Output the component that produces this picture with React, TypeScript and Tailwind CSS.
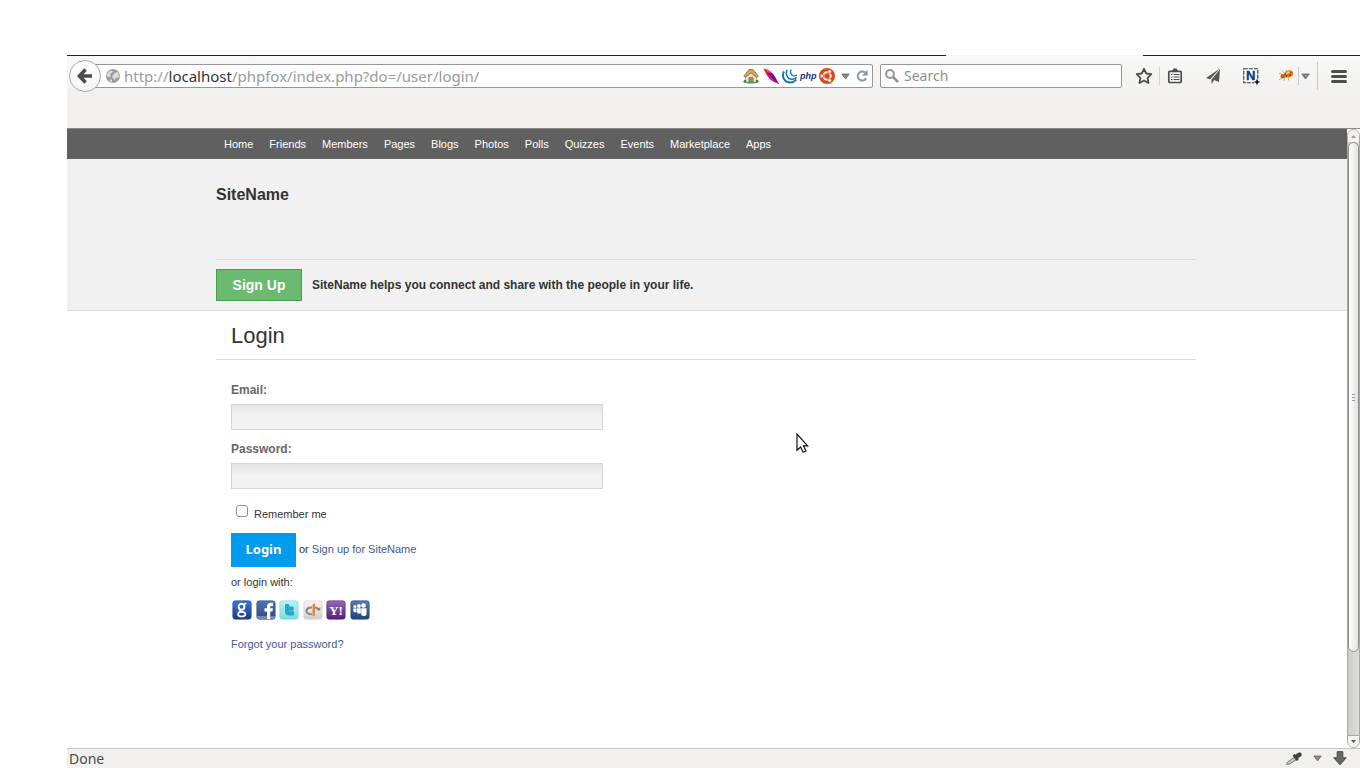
import React, { useState } from "react";

const navItems = ["Home", "Friends", "Members", "Pages", "Blogs", "Photos", "Polls", "Quizzes", "Events", "Marketplace", "Apps"];

function Caret({ className = "" }: { className?: string }) {
  return (
    <svg className={className} width="9" height="7" viewBox="0 0 9 7" aria-hidden="true">
      <path d="M.8 1h7.4L4.500 6z" fill="#8b8b89" stroke="#666" strokeWidth=".8" />
    </svg>
  );
}

function BackIcon() {
  return (
    <svg width="16" height="16" viewBox="0 0 16 16" aria-hidden="true">
      <path d="M8.500 1.500 2.500 8l6 6.500M3 8h12" fill="none" stroke="#4b4b4b" strokeWidth="3.600" />
    </svg>
  );
}

function GlobeIcon() {
  return (
    <svg width="14" height="14" viewBox="0 0 14 14" aria-hidden="true">
      <circle cx="7" cy="7" r="7" fill="#9b9b9b" />
      <path d="M1 5 4 1.500l3 .5-1 2-2 1 1 2-2 1.500L1 7zM8 5l2-2 2 .5L13.500 7 12 9l-2-.5L9 11 7 9.500 6 7zM4 10l2 1v2l-2-.6z" fill="#dcdcdc" />
    </svg>
  );
}

function HouseIcon() {
  return (
    <svg width="16" height="16" viewBox="0 0 16 16" aria-hidden="true">
      <ellipse cx="8" cy="13.800" rx="7.800" ry="1.800" fill="#4f9a4a" />
      <path d="M2.500 7.500 8 3l5.500 4.500v6.500h-11z" fill="#eee0c4" stroke="#b59a72" strokeWidth=".6" />
      <path d="M.8 8.300 6 1.500h4l5.300 6.800-1.600 1L8 4.800 2.400 9.300z" fill="#d9a45e" stroke="#8f6128" strokeWidth=".8" />
      <path d="M6 14V9.500h4V14z" fill="#8d8d90" stroke="#66666a" strokeWidth=".6" />
      <circle cx="2" cy="13" r="1.300" fill="#3f8b3c" />
      <circle cx="14" cy="13" r="1.300" fill="#3f8b3c" />
    </svg>
  );
}

function FeatherIcon() {
  return (
    <svg width="17" height="17" viewBox="0 0 17 17" aria-hidden="true">
      <path d="M.5.5C4 .8 7 2.500 9.500 5.500c3 3.500 4 6 5 8.500l1.500 2-3-1.200C8 13.500 3.500 8 .5.500z" fill="#c5128e" />
      <path d="M.5.500C3 .8 5.500 2 7 4L3.500 5.200C2.200 3.600 1.200 2 .5.500z" fill="#f0642c" />
      <path d="M9.500 5.500c3 3.500 4 6 5 8.500l-3-3L7 6z" fill="#5b1a87" />
      <path d="m2 2 14.300 14" stroke="#2a1555" strokeWidth=".7" />
    </svg>
  );
}

function JqueryIcon() {
  return (
    <svg width="16" height="16" viewBox="0 0 16 16" fill="none" stroke="#1a70b5" aria-hidden="true">
      <path d="M2 3.500C-.5 8 2 14 7.500 14.500c2.500.2 5-.8 6.800-2.800" strokeWidth="1.900" />
      <path d="M5 1.800C3.200 6 5 10.500 9 11.200c2.300.3 4.300-.4 5.700-1.800" strokeWidth="1.500" />
      <path d="M9 1.500c-1.200 3 .2 6 2.800 6.400 1.300.2 2.400-.2 3.200-.9" strokeWidth="1.300" />
    </svg>
  );
}

function PhpIcon() {
  return (
    <svg width="17" height="12" viewBox="0 0 17 12" aria-hidden="true">
      <text x="0" y="9" fontFamily="Liberation Sans, sans-serif" fontSize="9" fontWeight="bold" fontStyle="italic" fill="#27337f">php</text>
    </svg>
  );
}

function UbuntuIcon() {
  return (
    <svg width="16" height="16" viewBox="0 0 16 16" aria-hidden="true">
      <circle cx="8" cy="8" r="8" fill="#dd4814" />
      <circle cx="8" cy="8" r="3.700" fill="none" stroke="#fff" strokeWidth="1.900" />
      <g fill="#fff" stroke="#dd4814" strokeWidth=".8">
        <circle cx="2.900" cy="8" r="1.900" />
        <circle cx="10.600" cy="3.600" r="1.900" />
        <circle cx="10.600" cy="12.400" r="1.900" />
      </g>
    </svg>
  );
}

function ReloadIcon() {
  return (
    <svg width="12" height="12" viewBox="0 0 12 12" aria-hidden="true">
      <path d="M10.200 8.200A4.500 4.500 0 1 1 9 2.500" fill="none" stroke="#8795a1" strokeWidth="2" />
      <path d="M11.600 0v5.600H6z" fill="#8795a1" />
    </svg>
  );
}

function SearchIcon() {
  return (
    <svg width="14" height="14" viewBox="0 0 14 14" fill="none" stroke="#949494" aria-hidden="true">
      <circle cx="5" cy="5" r="3.900" strokeWidth="2" />
      <path d="m8 8 5 5" strokeWidth="2.600" />
    </svg>
  );
}

function StarIcon() {
  return (
    <svg width="18" height="18" viewBox="0 0 18 18" aria-hidden="true">
      <path d="m9 1.800 2.200 4.700 5.100.7-3.700 3.600.9 5.200L9 13.500 4.500 16l.9-5.200-3.700-3.600 5.100-.7z" fill="none" stroke="#4d4d4d" strokeWidth="1.800" strokeLinejoin="round" />
    </svg>
  );
}

function ClipboardIcon() {
  return (
    <svg width="16" height="16" viewBox="0 0 16 16" aria-hidden="true">
      <path d="M5 3 6.500.5h3L11 3z" fill="#4d4d4d" />
      <rect x="1.800" y="3.300" width="12.400" height="11.200" rx="1" fill="#f6f6f6" stroke="#4d4d4d" strokeWidth="1.700" />
      <path d="M4 6.500h1.500M6.500 6.500H12.500M4 9h1.500M6.500 9H12.500M4 11.500h1.500M6.500 11.500H12.500" stroke="#4d4d4d" strokeWidth="1.100" />
    </svg>
  );
}

function PlaneIcon() {
  return (
    <svg width="16" height="16" viewBox="0 0 16 16" aria-hidden="true">
      <path d="M15 .5 1 10l4 1.200zM14.500 2 6.500 11.500V16l2.200-3.200zM15 .500 9.200 12l4.800 2z" fill="#555" />
    </svg>
  );
}

function SelectionIcon() {
  return (
    <svg width="17" height="17" viewBox="0 0 17 17" aria-hidden="true">
      <rect x=".8" y=".8" width="14" height="14" fill="#fff" stroke="#333" strokeWidth="1.100" strokeDasharray="4 1" />
      <text x="3" y="12" fontFamily="Liberation Sans, sans-serif" fontSize="13" fontWeight="bold" fill="#0b3b94" stroke="#0b3b94" strokeWidth=".4">N</text>
      <path d="M14 11v6M11 14h6" stroke="#fff" strokeWidth="3" />
      <path d="M14 11.500v5M11.500 14h5" stroke="#111" strokeWidth="1.600" />
    </svg>
  );
}

function BugIcon() {
  return (
    <svg width="16" height="16" viewBox="0 0 16 16" aria-hidden="true">
      <path d="M4 6.500 1 5M4.500 9.500 1 12M7 10l-1.500 3M10 10l1 2.500M6 5 4 2.500M9 4.500 8 2M13 7l2 1" stroke="#a59b85" strokeWidth=".8" fill="none" />
      <ellipse cx="10.500" cy="6" rx="4.800" ry="3.600" transform="rotate(-24 10.500 6)" fill="#e87812" />
      <circle cx="4.800" cy="8.300" r="2.300" fill="#c75c10" />
      <ellipse cx="10" cy="4.700" rx="2.600" ry="1.100" transform="rotate(-22 10 4.700)" fill="#ffc94e" />
      <path d="m8 8.300 1-1M11 7.500l1.500-1M12.500 4l.8.400M7 5.500l.5 1" stroke="#411b03" strokeWidth="1.200" />
    </svg>
  );
}

function DropperIcon() {
  return (
    <svg width="18" height="14" viewBox="0 0 18 14" aria-hidden="true">
      <path d="m1.500 12.500 1-2.500 6.500-4.500 2 2.500-6.500 4z" fill="#c9c9c6" stroke="#777" strokeWidth="1" />
      <path d="m7.500 3.500 2-1.500 1.200.8C12 .8 14-.2 15.800.8c1.700 1.200.9 3.600-1.300 4.500l-1 .5v2.200l-1.900.9z" fill="#414141" />
    </svg>
  );
}

function DownloadIcon() {
  return (
    <svg width="14" height="15" viewBox="0 0 14 15" aria-hidden="true">
      <path d="M4.200.7h5.600v6.100h3.400L7 13.800.8 6.800h3.400z" fill="#666" stroke="#444" strokeWidth="1" strokeLinejoin="round" />
    </svg>
  );
}

type Social = { name: string; top: string; bottom: string; glyph: React.ReactNode };

const socials: Social[] = [
  {
    name: "Google", top: "#3974e8", bottom: "#1e3c82",
    glyph: (
      <g fill="none" stroke="#fff">
        <ellipse cx="9.500" cy="6.800" rx="2.900" ry="3" strokeWidth="1.900" />
        <ellipse cx="9.700" cy="14.200" rx="3.600" ry="2.300" strokeWidth="1.700" />
        <path d="M11.500 4.200 14.500 3.500M8.800 9.800c-1.600 1.100-.5 1.700 1.500 2.200" strokeWidth="1.500" />
      </g>
    ),
  },
  {
    name: "Facebook", top: "#5275b4", bottom: "#2c4983",
    glyph: <><path d="M1 16h18v3H1z" fill="#6d88ba" /><path d="M11 19v-7.500H8.500V8.300H11V6.500c0-2.500 1.500-3.700 4-3.700h2V6h-1.500c-1 0-1.300.3-1.300 1.200v1.100h2.700l-.5 3.200h-2.200V19z" fill="#fff" /></>,
  },
  {
    name: "Twitter", top: "#b8f2f5", bottom: "#7fd9e2",
    glyph: <path d="M6.500 4.500v7.300c0 2.300 1.300 3.200 3.700 3.200h4.300v-3.200h-3.800c-.8 0-1-.3-1-1v-.6h4.500V7H9.700V4.500z" fill="#27a5c9" stroke="#27a5c9" strokeWidth="1" strokeLinejoin="round" />,
  },
  {
    name: "OpenID", top: "#f6f6f6", bottom: "#cfcfcf",
    glyph: <><path d="M9 7.500c-3.300 0-5.500 1.300-5.500 3.500 0 1.900 2 3.200 5.500 3.400M12 7.600c2 .2 3 .6 4 1.500" fill="none" stroke="#858585" strokeWidth="1.900" /><path d="m17.500 7.200-.5 3.500-4-1z" fill="#858585" /><path d="M9.500 4.500 12 3.200v12l-2.500 1.300z" fill="#ef8518" /></>,
  },
  {
    name: "Yahoo", top: "#9568b5", bottom: "#562078",
    glyph: <text x="10" y="15" textAnchor="middle" fontFamily="Liberation Serif, serif" fontSize="13" fontWeight="bold" fill="#fff">Y!</text>,
  },
  {
    name: "MySpace", top: "#5879b7", bottom: "#244179",
    glyph: <g fill="#fff"><circle cx="13.500" cy="5.500" r="2.300" /><circle cx="8.900" cy="6" r="1.900" /><circle cx="4.900" cy="6.500" r="1.600" /><path d="M3.300 8.500h3.100v3.700H5c-1.100 0-1.700-.6-1.700-1.500zM6.900 8.300h3.900v5.200H9c-1.300 0-2.100-.7-2.100-1.800zM11.200 8.200h5.300v5.500c0 1.500-.8 2.300-2.300 2.300h-.7c-1.500 0-2.300-.7-2.300-2z" /></g>,
  },
];

function SocialIcon({ item }: { item: Social }) {
  const id = `fill-${item.name}`;
  return (
    <svg width="20" height="20" viewBox="0 0 20 20" aria-hidden="true">
      <defs>
        <linearGradient id={id} x1="0" y1="0" x2="0" y2="1">
          <stop offset="0" stopColor={item.top} />
          <stop offset="1" stopColor={item.bottom} />
        </linearGradient>
      </defs>
      <rect x=".8" y=".8" width="18.400" height="18.400" rx="2.500" fill={`url(#${id})`} stroke={item.bottom} strokeOpacity=".6" />
      {item.glyph}
    </svg>
  );
}

function BrowserBar() {
  return (
    <header className="h-[73px] border-b border-[#8e8c89] bg-linear-to-b from-[#f8f8f7] to-[#f1f0ee] to-60% font-['Noto_Sans',sans-serif] text-[#4c4c4c]">
      <div className="flex h-10 items-center pr-[13px]">
        <button aria-label="Back" className="z-10 ml-0.5 flex size-8 shrink-0 items-center justify-center rounded-full border border-[#a4adb8] bg-linear-to-b from-white to-[#f4f4f3]">
          <BackIcon />
        </button>
        <div className="-ml-2 flex h-6 min-w-0 flex-1 items-center rounded-r-xs border border-[#979797] bg-white pr-1 pl-3">
          <GlobeIcon />
          <div className="ml-1 min-w-0 flex-1 overflow-hidden text-[15px] leading-5 whitespace-nowrap text-[#9b9b9b]">
            http://<span className="text-[#333]">localhost</span>/phpfox/index.php?do=/user/login/
          </div>
          <div className="flex items-center gap-0.5">
            <button aria-label="Home page" className="mr-0.5"><HouseIcon /></button>
            <button aria-label="Apache"><FeatherIcon /></button>
            <button aria-label="jQuery"><JqueryIcon /></button>
            <button aria-label="PHP manual"><PhpIcon /></button>
            <button aria-label="Ubuntu"><UbuntuIcon /></button>
          </div>
          <button aria-label="Show history" className="ml-1.5"><Caret /></button>
          <button aria-label="Reload" className="ml-1.5"><ReloadIcon /></button>
        </div>
        <label className="ml-[7px] flex h-6 w-[242px] shrink-0 items-center gap-[5px] rounded-xs border border-[#979797] bg-white pl-1">
          <SearchIcon />
          <input aria-label="Search" placeholder="Search" className="min-w-0 flex-1 text-sm leading-5 outline-none placeholder:text-[#8f8f8f]" />
        </label>
        <div className="ml-3 flex shrink-0 items-center">
          <button aria-label="Bookmark this page" className="mr-1.5 ml-px"><StarIcon /></button>
          <span className="h-[18px] w-px bg-[#cfd3d8]" />
          <button aria-label="Bookmarks" className="ml-[7px]"><ClipboardIcon /></button>
          <button aria-label="Send" className="ml-[22px]"><PlaneIcon /></button>
          <button aria-label="Capture selection" className="ml-[22px]"><SelectionIcon /></button>
          <button aria-label="Firebug" className="ml-[18px]"><BugIcon /></button>
          <span className="ml-1 h-[18px] w-px bg-[#c3cad3]" />
          <button aria-label="Firebug options" className="ml-0.5"><Caret /></button>
          <span className="ml-[7px] h-7 w-px bg-[#c3cad3]" />
          <button aria-label="Open menu" className="ml-[13px] flex w-4 flex-col gap-0.5">
            <span className="h-[3px] w-full rounded-xs bg-[#4d4d4d]" />
            <span className="h-[3px] w-full rounded-xs bg-[#4d4d4d]" />
            <span className="h-[3px] w-full rounded-xs bg-[#4d4d4d]" />
          </button>
        </div>
      </div>
    </header>
  );
}

function ScrollRail() {
  return (
    <div aria-hidden="true" className="flex w-[13px] shrink-0 flex-col rounded-lg border border-[#aaa8a5] bg-linear-to-r from-[#cfcdcb] to-[#dfdddb]">
      <div className="flex h-3 items-center justify-center rounded-t-lg bg-[#f4f3f2]">
        <svg width="5" height="3" viewBox="0 0 5 3"><path d="M0 3 2.500 0 5 3z" fill="#999" /></svg>
      </div>
      <div className="flex h-[510px] flex-col items-center justify-center gap-0.5 rounded-lg border border-[#8f8d8b] bg-linear-to-r from-white to-[#e4e2e0]">
        <span className="h-px w-[3px] bg-[#999]" />
        <span className="h-px w-[3px] bg-[#999]" />
        <span className="h-px w-[3px] bg-[#999]" />
      </div>
      <div className="flex-1" />
      <div className="flex h-3 items-center justify-center rounded-b-lg border-t border-[#aaa8a5] bg-[#f4f3f2]">
        <svg width="5" height="3" viewBox="0 0 5 3"><path d="M0 0h5L2.500 3z" fill="#555" /></svg>
      </div>
    </div>
  );
}

function LoginForm() {
  const [remember, setRemember] = useState(false);
  const field = "block h-[26px] w-[372px] border border-[#d5d5d5] bg-linear-to-b from-[#e6e6e6] to-[#f3f3f3] to-50% px-1 text-xs outline-none";
  return (
    <form className="px-[15px] pt-[22px]" onSubmit={(e) => e.preventDefault()}>
      <label htmlFor="email" className="mb-1.5 block text-xs leading-4 font-bold text-[#666]">Email:</label>
      <input id="email" type="email" className={field} />
      <label htmlFor="password" className="mt-[11px] mb-1.5 block text-xs leading-4 font-bold text-[#666]">Password:</label>
      <input id="password" type="password" className={field} />
      <div className="mt-4 flex h-4 pl-[5px]">
        <input
          id="remember"
          type="checkbox"
          checked={remember}
          onChange={(e) => setRemember(e.target.checked)}
          className="size-3 appearance-none rounded-[3px] border border-[#918f8c] bg-white checked:bg-[#666]"
        />
        <label htmlFor="remember" className="mt-px ml-1.5 leading-4">Remember me</label>
      </div>
      <div className="mt-3 flex items-center">
        <button className="h-[34px] w-[65px] bg-[#009bef] font-['Noto_Sans',sans-serif] text-[13px] font-bold text-white">Login</button>
        <p className="ml-[3px] pb-0.5 leading-4">or <a href="#signup" className="text-[#3b5998]">Sign up for SiteName</a></p>
      </div>
      <p className="mt-[7px] leading-4">or login with:</p>
      <div className="mt-2.5 ml-px flex w-[138px] justify-between">
        {socials.map((item) => (
          <a key={item.name} href={`#${item.name}`} aria-label={item.name} className="size-5 shrink-0"><SocialIcon item={item} /></a>
        ))}
      </div>
      <p className="mt-4 leading-4"><a href="#forgot" className="text-[#3b5998]">Forgot your password?</a></p>
    </form>
  );
}

export default function App() {
  return (
    <div className="flex min-h-screen flex-col bg-white pt-[55px] pl-[67px] font-['Liberation_Sans',sans-serif] text-[11px] text-[#333]">
      <div aria-hidden="true" className="flex h-px">
        <span className="flex-1 bg-[#241f22]" />
        <span className="w-[197px] bg-[#f5f4f3]" />
        <span className="w-[217px] bg-[#241f22]" />
      </div>
      <BrowserBar />
      <div className="flex flex-1">
        <div className="relative min-w-0 flex-1">
          <nav className="bg-[#606060] pr-0.5">
            <ul className="mx-auto flex h-[30px] max-w-[980px] items-center">
              {navItems.map((item) => (
                <li key={item}><a href={`#${item}`} className="px-2 text-white">{item}</a></li>
              ))}
            </ul>
          </nav>
          <div className="border-b border-[#dcdcdc] bg-[#f1f1f1] pr-0.5">
            <div className="mx-auto max-w-[980px]">
              <div className="h-[100px] pt-6">
                <a href="#home" className="text-base leading-6 font-bold">SiteName</a>
              </div>
              <div className="flex items-center gap-2.5 border-t border-[#dcdcdc] py-[9px]">
                <button className="h-8 w-[86px] border border-[#4a9a52] bg-[#6aba70] text-sm font-bold text-white">Sign Up</button>
                <p className="text-xs font-bold">SiteName helps you connect and share with the people in your life.</p>
              </div>
            </div>
          </div>
          <main className="pr-0.5">
            <div className="mx-auto max-w-[980px]">
              <h1 className="h-[49px] border-b border-[#dcdcdc] px-[15px] pt-[11px] text-[22px] leading-7">Login</h1>
              <LoginForm />
            </div>
          </main>
          <svg className="pointer-events-none absolute top-[304px] left-[729px]" width="13" height="21" viewBox="0 0 13 21" aria-hidden="true">
            <path d="M1 1v16.300l3.600-3.300 2.500 5.300 2.800-1.300-2.500-5.200h4.200z" fill="#fff" stroke="#111" strokeWidth="1.200" />
          </svg>
        </div>
        <ScrollRail />
      </div>
      <footer className="flex h-5 items-center border-t border-[#c8c6c3] bg-[#f1f0ee] pr-[13px] pl-0.5 font-['Noto_Sans',sans-serif] text-sm leading-5 text-[#4c4c4c]">
        <span className="flex-1">Done</span>
        <button aria-label="Pick a colour"><DropperIcon /></button>
        <button aria-label="Colour options" className="ml-2.5"><Caret /></button>
        <button aria-label="Downloads" className="ml-[11px]"><DownloadIcon /></button>
      </footer>
    </div>
  );
}
